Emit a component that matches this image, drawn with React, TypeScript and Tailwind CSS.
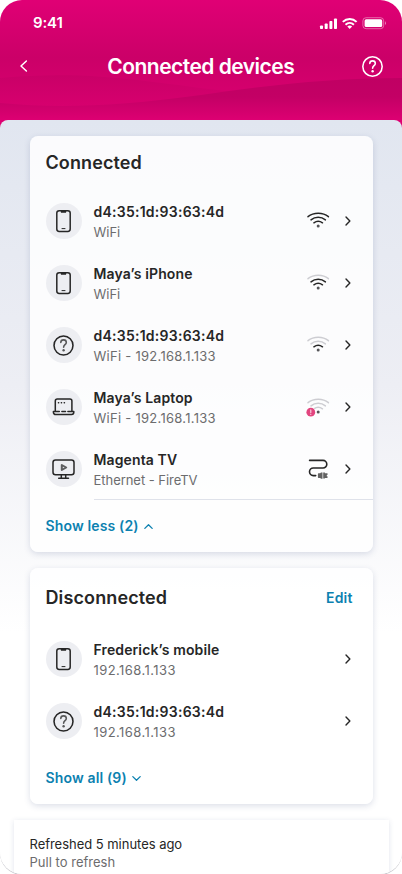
import React from "react";

type Kind = "phone" | "unknown" | "laptop" | "tv";
type Link = "wifi3" | "wifi2" | "wifi1" | "wifi0" | "ethernet" | "none";
type Device = { name: string; detail: string; kind: Kind; link: Link };

const connected: Device[] = [
  { name: "d4:35:1d:93:63:4d", detail: "WiFi", kind: "phone", link: "wifi3" },
  { name: "Maya’s iPhone", detail: "WiFi", kind: "phone", link: "wifi2" },
  { name: "d4:35:1d:93:63:4d", detail: "WiFi - 192.168.1.133", kind: "unknown", link: "wifi1" },
  { name: "Maya’s Laptop", detail: "WiFi - 192.168.1.133", kind: "laptop", link: "wifi0" },
  { name: "Magenta TV", detail: "Ethernet - FireTV", kind: "tv", link: "ethernet" },
];

const disconnected: Device[] = [
  { name: "Frederick’s mobile", detail: "192.168.1.133", kind: "phone", link: "none" },
  { name: "d4:35:1d:93:63:4d", detail: "192.168.1.133", kind: "unknown", link: "none" },
];

function QuestionIcon({ size, dim }: { size: number; dim?: boolean }) {
  return (
    <svg width={size} height={size} viewBox="0 0 24 24" fill="none" stroke="currentColor" strokeWidth="1.5" strokeLinecap="round" strokeLinejoin="round">
      <circle cx="12" cy="12" r={dim ? 9.1 : 9.3} />
      <g opacity={dim ? 0.75 : 1}>
        <path d="M9.4 9.2c0-1.6 1.1-2.6 2.7-2.6s2.6 1.1 2.6 2.5c0 2.1-2.6 2.2-2.6 4.5" />
        <circle cx="12.1" cy="16.5" r="1.15" fill="currentColor" stroke="none" />
      </g>
    </svg>
  );
}

function DeviceIcon({ kind }: { kind: Kind }) {
  if (kind === "unknown") return <QuestionIcon size={25} dim />;
  return (
    <svg width="24" height="24" viewBox="0 0 24 24" fill="none" stroke="currentColor" strokeWidth="1.5" strokeLinecap="round" strokeLinejoin="round">
      {kind === "phone" && (
        <>
          <rect x="4.8" y="1.7" width="13.4" height="20.8" rx="2.4" />
          <path d="M8.8 2h5.4v.9a.9.9 0 0 1-.9.9H9.7a.9.9 0 0 1-.9-.9z" fill="currentColor" stroke="none" />
          <path d="M10 19.6h3" strokeWidth="1" />
        </>
      )}
      {kind === "laptop" && (
        <>
          <path d="M3.3 16V6a2 2 0 0 1 2-2h12.6a2 2 0 0 1 2 2v10" />
          <path d="M9.9 16.4h3.6" />
          <path d="M7.3 16.4H1.4v.9a2.2 2.2 0 0 0 2.2 2.2h16a2.2 2.2 0 0 0 2.2-2.2v-.9h-5.9" />
          <path d="M6.4 7.7h.3M9.3 7.7h.3M12.2 7.7h.3" strokeWidth="1.4" />
        </>
      )}
      {kind === "tv" && (
        <>
          <rect x="1" y="3.1" width="21" height="14.6" rx="2.5" />
          <path d="M9.3 17.8v3M13.7 17.8v3M6.7 21.2h9.8" />
          <path d="M9.8 8v5l4.4-2.5z" strokeWidth="2" opacity=".72" />
        </>
      )}
    </svg>
  );
}

function LinkIcon({ link }: { link: Link }) {
  if (link === "none") return null;
  if (link === "ethernet")
    return (
      <svg width="24" height="24" viewBox="0 0 24 24" fill="none" stroke="currentColor" strokeWidth="1.6" strokeLinecap="round">
        <path d="M3.6 3.4h13.4a3.8 3.8 0 0 1 0 7.6H7.3a3.8 3.8 0 0 0 0 7.6h2.4" />
        <path d="M11.9 17a.7.7 0 0 1 .7-.7h1.5l1-.9h1.4v6.4h-1.4l-1-.9h-1.5a.7.7 0 0 1-.7-.7zM17.2 15.6h1.7v.7h2.6v1.6h-.7v1.4h.7v1.6h-2.6v.7h-1.7z" fill="currentColor" stroke="none" opacity=".72" />
      </svg>
    );
  const level = Number(link.slice(4));
  const shade = (n: number) => (level >= n ? "#262626" : "#cdcdd2");
  return (
    <svg width="24" height="24" viewBox="0 0 24 24" fill="none" strokeWidth="1.5" strokeLinecap="round">
      <path d="M2 7.7C7.6 3.1 16.8 3.1 22.4 7.7" stroke={shade(3)} />
      <path d="M5 10.9c4.2-3.4 10.2-3.4 14.4 0" stroke={shade(2)} />
      <path d="M7.9 13.8c2.6-1.9 6-1.9 8.6 0" stroke={shade(1)} />
      <circle cx="12.2" cy="16.9" r="1.5" fill="#555558" />
      {level === 0 && (
        <>
          <circle cx="4.8" cy="17.2" r="4.9" fill="#fff" />
          <circle cx="4.8" cy="17.2" r="4.4" fill="#e2457f" />
          <path d="M4.8 14.9v2.7M4.8 19.4v.1" stroke="#fff" strokeWidth="1.1" opacity=".8" />
        </>
      )}
    </svg>
  );
}

function Chevron({ className }: { className: string }) {
  return (
    <svg className={className} viewBox="0 0 12 12" fill="none" stroke="currentColor" strokeWidth="1.2" strokeLinecap="round" strokeLinejoin="round">
      <path d="M4.3 2.6 7.6 6 4.3 9.4" />
    </svg>
  );
}

function DeviceRow({ device }: { device: Device }) {
  const nameTracking = device.name.includes(":") ? "tracking-[0.25px]" : "tracking-[0.12px]";
  const detailTracking = device.detail.startsWith("192")
    ? "tracking-[0.42px]"
    : device.detail.includes("192")
      ? "tracking-[0.27px]"
      : "tracking-[-0.04px]";
  return (
    <li className="flex h-[62px] items-center pl-4 pr-[18px]">
      <span className="flex size-9 shrink-0 items-center justify-center rounded-full bg-[#edeef2]">
        <DeviceIcon kind={device.kind} />
      </span>
      <div className="ml-3 flex-1 pt-px">
        <p className={`text-[14px] leading-5 font-semibold whitespace-nowrap ${nameTracking}`}>{device.name}</p>
        <p className={`text-[13px] leading-5 whitespace-nowrap text-[#6c6c6e] ${detailTracking}`}>{device.detail}</p>
      </div>
      <LinkIcon link={device.link} />
      <Chevron className="ml-[10.5px] size-3.5" />
    </li>
  );
}

const cardClass = "mx-[29.5px] rounded-lg bg-white/85 shadow-[0_2px_6px_rgba(60,80,130,0.18)]";
const linkClass = "text-[14px] leading-5 font-semibold tracking-[0.14px] text-[#0c81b0]";

export default function App() {
  return (
    <div className="h-[874px] w-[402px] overflow-hidden bg-white">
      <div className="flex h-full flex-col overflow-hidden rounded-[22px] bg-white font-['Inter','Liberation_Sans',sans-serif] text-[#262626] shadow-[0_1px_0_#c9c9ce]">
        <header className="relative h-[128px] shrink-0 bg-linear-to-b from-[#e00075] via-[#cb0068] via-45% to-[#de0072] to-95% text-white">
          <svg className="absolute inset-0" width="402" height="128" viewBox="0 0 402 128">
            <defs>
              <linearGradient id="upper" x1="0" y1="0" x2="0" y2="1">
                <stop offset="0" stopColor="#c50065" stopOpacity=".6" />
                <stop offset="0.7" stopColor="#d8006f" stopOpacity=".6" />
                <stop offset="1" stopColor="#d8006f" stopOpacity="0" />
              </linearGradient>
              <linearGradient id="lower" gradientUnits="userSpaceOnUse" x1="0" y1="78" x2="0" y2="120">
                <stop offset="0" stopColor="#c00063" />
                <stop offset="0.45" stopColor="#c30065" />
                <stop offset="1" stopColor="#dd0072" />
              </linearGradient>
            </defs>
            <path d="M0 78C90 70 140 81 225 91L402 108V128H0z" fill="url(#upper)" />
            <path d="M0 103C60 109 120 106 201 95C270 85 330 78 402 78V128H0z" fill="url(#lower)" />
          </svg>
          <div className="relative flex h-[46px] items-center justify-between pl-[33px] pr-4">
            <span className="text-[15px] leading-5 font-semibold tracking-[-0.15px]">9:41</span>
            <svg width="68" height="14" viewBox="0 0 68 14" fill="white">
              <rect x="2" y="9.4" width="3" height="3.6" rx=".8" />
              <rect x="6.7" y="7.4" width="3" height="5.6" rx=".8" />
              <rect x="11.4" y="5" width="3" height="8" rx=".8" />
              <rect x="16" y="2.4" width="3" height="10.6" rx=".8" />
              <g fill="none" stroke="white" strokeWidth="2">
                <path d="M24.8 5.9c4-3.9 9.8-3.9 13.8 0" />
                <path d="M27.5 8.7c2.5-2.3 5.9-2.3 8.4 0" />
              </g>
              <path d="M29.3 10.4c1.3-1.1 3.5-1.1 4.8 0l-2.4 2.5z" />
              <rect x="44.9" y="1.7" width="20.8" height="11" rx="3.2" fill="none" stroke="white" strokeOpacity=".4" />
              <rect x="46.6" y="3.3" width="17.6" height="7.8" rx="1.6" />
              <path d="M67 5.3v3.8c1.2-.7 1.2-3.1 0-3.8z" opacity=".5" />
            </svg>
          </div>
          <div className="relative flex h-10 items-center justify-between pl-[15px] pr-[17.5px]">
            <svg width="20" height="20" viewBox="0 0 20 20" fill="none" stroke="white" strokeWidth="1.5" strokeLinecap="round" strokeLinejoin="round">
              <path d="m11.4 5-5.4 5 5.4 5" />
            </svg>
            <h1 className="pt-0.5 pl-[7px] text-[21px] leading-7 font-[560] tracking-[-0.52px] whitespace-nowrap">Connected devices</h1>
            <QuestionIcon size={25} />
          </div>
        </header>

        <main className="relative -mt-2 flex flex-1 flex-col rounded-t-lg bg-linear-to-b from-[#e1e6f0] via-[#edeef4] via-35% to-white to-68% pt-4">
          <section className={`h-[416px] ${cardClass}`}>
            <h2 className="pt-3.5 pl-4 text-[18px] leading-[26px] font-semibold tracking-[0.1px]">Connected</h2>
            <ul className="pt-3.5">
              {connected.map((d, i) => (
                <DeviceRow key={i} device={d} />
              ))}
            </ul>
            <div className="-mt-px ml-16 h-px bg-[#dfe2ea]" />
            <button className={`mt-4 ml-4 flex h-5 items-center gap-[3px] ${linkClass}`}>
              Show less (2)
              <Chevron className="size-[13px] -rotate-90" />
            </button>
          </section>

          <section className={`mt-4 h-[236px] ${cardClass}`}>
            <div className="flex items-center justify-between pt-[17px] pr-5 pl-4">
              <h2 className="text-[18px] leading-[26px] font-semibold tracking-[0.12px]">Disconnected</h2>
              <button className={linkClass}>Edit</button>
            </div>
            <ul className="pt-[17px]">
              {disconnected.map((d, i) => (
                <DeviceRow key={i} device={d} />
              ))}
            </ul>
            <button className={`mt-4 ml-4 flex h-5 items-center gap-[3px] ${linkClass}`}>
              Show all (9)
              <Chevron className="size-[13px] rotate-90" />
            </button>
          </section>

          <footer className="mx-[13.5px] mt-4 h-[54px] bg-white pt-[15px] pl-4 shadow-[0_1px_5px_rgba(60,80,130,0.16)]">
            <p className="text-[13px] leading-[18px] tracking-[-0.03px]">Refreshed 5 minutes ago</p>
            <p className="text-[13px] leading-[18px] tracking-[0.02px] text-[#6c6c6e]">Pull to refresh</p>
          </footer>
        </main>
      </div>
    </div>
  );
}
